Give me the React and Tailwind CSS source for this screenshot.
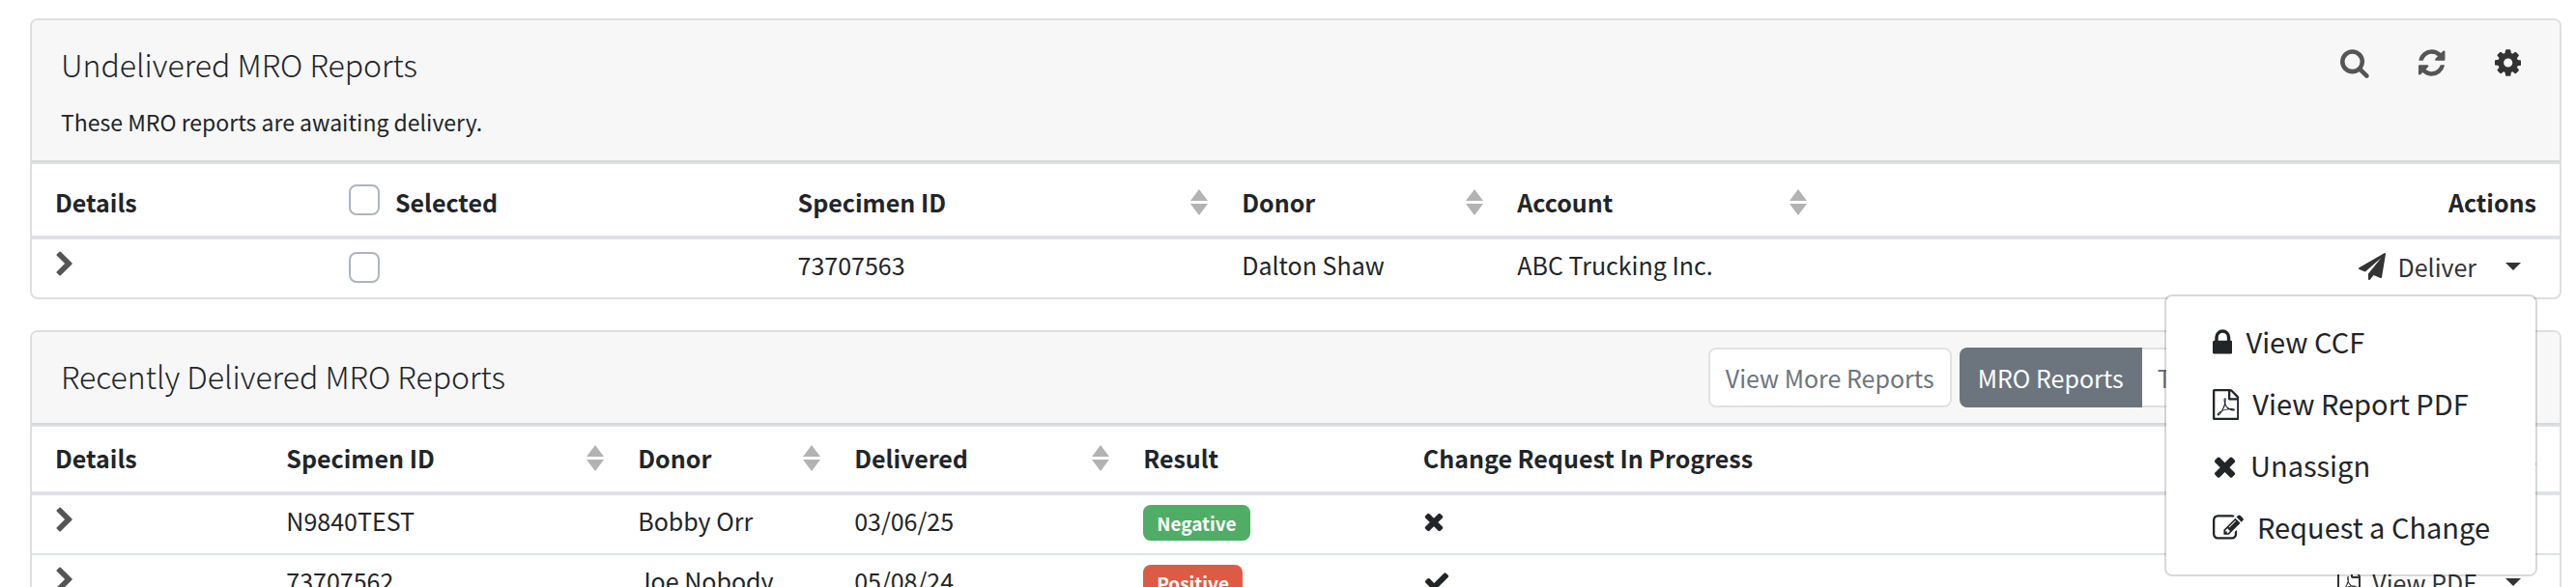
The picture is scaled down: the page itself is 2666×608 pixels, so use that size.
import React from "react";

const GLYPHS = {
  search: ["64 0 1664 1792", "M1216 832q0-185-131.5-316.5t-316.5-131.5-316.5 131.5-131.5 316.5 131.5 316.5 316.5 131.5 316.5-131.5 131.5-316.5zm512 832q0 52-38 90t-90 38q-54 0-90-38l-343-342q-179 124-399 124-143 0-273.5-55.5t-225-150-150-225-55.5-273.5 55.5-273.5 150-225 225-150 273.5-55.5 273.5 55.5 225 150 150 225 55.5 273.5q0 220-124 399l343 343q37 37 37 90z"],
  refresh: ["128 0 1536 1792", "M1639 1056q0 5-1 7-64 268-268 434.5t-478 166.5q-146 0-282.5-55t-243.5-157l-129 129q-19 19-45 19t-45-19-19-45v-448q0-26 19-45t45-19h448q26 0 45 19t19 45-19 45l-137 137q71 66 161 102t187 36q134 0 250-65t186-179q11-17 53-117 8-23 30-23h192q13 0 22.5 9.5t9.5 22.5zm25-800v448q0 26-19 45t-45 19h-448q-26 0-45-19t-19-45 19-45l138-138q-148-137-349-137-134 0-250 65t-186 179q-11 17-53 117-8 23-30 23h-199q-13 0-22.5-9.5t-9.5-22.5v-7q65-268 270-434.5t480-166.5q146 0 284 55.5t245 156.5l130-129q19-19 45-19t45 19 19 45z"],
  cog: ["128 0 1536 1792", "M1152 896q0-106-75-181t-181-75-181 75-75 181 75 181 181 75 181-75 75-181zm512-109v222q0 12-8 23t-20 13l-185 28q-19 54-39 91 35 50 107 138 10 12 10 25t-9 23q-27 37-99 108t-94 71q-12 0-26-9l-138-108q-44 23-91 38-16 136-29 186-7 28-36 28h-222q-14 0-24.5-8.5t-11.5-21.5l-28-184q-49-16-90-37l-141 107q-10 9-25 9-14 0-25-11-126-114-165-168-7-10-7-23 0-12 8-23 15-21 51-66.5t54-70.5q-27-50-41-99l-183-27q-13-2-21-12.5t-8-23.5v-222q0-12 8-23t19-13l186-28q14-46 39-92-40-57-107-138-10-12-10-24 0-10 9-23 26-36 98.5-107.5t94.5-71.5q13 0 26 10l138 107q44-23 91-38 16-136 29-186 7-28 36-28h222q14 0 24.5 8.5t11.5 21.5l28 184q49 16 90 37l142-107q9-9 24-9 13 0 25 10 129 119 165 170 7 8 7 22 0 12-8 23-15 21-51 66.5t-54 70.5q26 50 41 98l183 28q13 2 21 12.5t8 23.5z"],
  lock: ["320 0 1152 1792", "M640 768h512v-192q0-106-75-181t-181-75-181 75-75 181v192zm832 96v576q0 40-28 68t-68 28h-960q-40 0-68-28t-28-68v-576q0-40 28-68t68-28h32v-192q0-184 132-316t316-132 316 132 132 316v192h32q40 0 68 28t28 68z"],
  pdf: ["128 0 1536 1792", "M1596 380q28 28 48 76t20 88v1152q0 40-28 68t-68 28h-1344q-40 0-68-28t-28-68v-1600q0-40 28-68t68-28h896q40 0 88 20t76 48zm-444-244v376h376q-10-29-22-41l-313-313q-12-12-41-22zm384 1528v-1024h-416q-40 0-68-28t-28-68v-416h-768v1536h1280zm-514-593q33 26 84 56 59-7 117-7 147 0 177 49 16 22 2 52 0 1-1 2l-2 2v1q-6 38-71 38-48 0-115-20t-130-53q-221 24-392 83-153 262-242 262-15 0-28-7l-24-12q-1-1-6-5-10-10-6-36 9-40 56-91.5t132-96.5q14-9 23 6 2 2 2 4 52-85 107-197 68-136 104-262-24-82-30.5-159.5t6.5-127.5q11-40 42-40h22q23 0 35 15 18 21 9 68-2 6-4 8 1 3 1 8v30q-2 123-14 192 55 164 146 238zm-576 411q52-24 137-158-51 40-87.5 84t-49.5 74zm398-920q-15 42-2 132 1-7 7-44 0-3 7-43 1-4 4-8-1-1-1-2-1-2-1-3-1-22-13-36 0 1-1 2v2zm-124 661q135-54 284-81-2-1-13-9.5t-16-13.5q-76-67-127-176-27 86-83 197-30 56-45 83zm646-16q-24-24-140-24 76 28 124 28 14 0 18-1 0-1-2-3z"],
  times: ["192 0 1408 1792", "M1490 1322q0 40-28 68l-136 136q-28 28-68 28t-68-28l-294-294-294 294q-28 28-68 28t-68-28l-136-136q-28-28-28-68t28-68l294-294-294-294q-28-28-28-68t28-68l136-136q28-28 68-28t68 28l294 294 294-294q28-28 68-28t68 28l136 136q28 28 28 68t-28 68l-294 294 294 294q28 28 28 68z"],
  check: ["0 0 1792 1792", "M1671 566q0 40-28 68l-724 724-136 136q-28 28-68 28t-68-28l-136-136-362-362q-28-28-28-68t28-68l136-136q28-28 68-28t68 28l294 295 656-657q28-28 68-28t68 28l136 136q28 28 28 68z"],
  edit: ["0 0 1792 1792", "M888 1184l116-116-152-152-116 116v56h96v96h56zm440-720q-16-16-33 1l-350 350q-17 17-1 33t33-1l350-350q17-17 1-33zm80 594v190q0 119-84.5 203.5t-203.5 84.5h-832q-119 0-203.5-84.5t-84.5-203.5v-832q0-119 84.5-203.5t203.5-84.5h832q63 0 117 25 15 7 18 23 3 17-9 29l-49 49q-14 14-32 8-23-6-45-6h-832q-66 0-113 47t-47 113v832q0 66 47 113t113 47h832q66 0 113-47t47-113v-126q0-13 9-22l64-64q15-15 35-7t20 29zm-96-738l288 288-672 672h-288v-288zm444 132l-92 92-288-288 92-92q28-28 68-28t68 28l152 152q28 28 28 68t-28 68z"],
  chevron: ["250 0 1280 1792", "M1363 877l-742 742q-19 19-45 19t-45-19l-166-166q-19-19-19-45t19-45l531-531-531-531q-19-19-19-45t19-45l166-166q19-19 45-19t45 19l742 742q19 19 19 45t-19 45z"],
  plane: ["0 0 1792 1792", "M1764 11q33 24 27 64l-256 1536q-5 29-32 45-14 8-31 8-11 0-24-5l-453-185-242 295q-18 23-49 23-13 0-22-4-19-7-30.5-23.5t-11.5-36.5v-349l864-1059-1069 925-395-162q-37-14-40-55-2-40 32-59l1664-960q15-9 32-9 20 0 36 11z"],
};

function Icon({ name, className = "h-7" }) {
  const [viewBox, d] = GLYPHS[name];
  return (
    <svg viewBox={viewBox} fill="currentColor" aria-hidden="true" className={`block w-auto shrink-0 ${className}`}>
      <path d={d} />
    </svg>
  );
}

function Caret() {
  return (
    <svg viewBox="0 0 16 8" fill="currentColor" aria-hidden="true" className="block h-2 w-4">
      <path d="M0 0H16L8 8Z" />
    </svg>
  );
}

function Th({ children, className = "", sortable }) {
  return (
    <th scope="col" className={`border-b-4 border-[#dee2e6] pb-[17px] pl-6 text-left align-bottom font-bold ${sortable ? "pr-[11px]" : "pr-6"} ${className}`}>
      {sortable ? (
        <div className="flex items-center justify-between">
          <span>{children}</span>
          <button type="button" aria-label={`Sort by ${children}`} className="text-[#b3b3b3]">
            <svg viewBox="0 0 18 27" fill="currentColor" className="block h-[27px] w-[18px]">
              <path d="M9 0L18 12H0ZM0 15H18L9 27Z" />
            </svg>
          </button>
        </div>
      ) : (
        children
      )}
    </th>
  );
}

function Td({ children, className = "pt-2" }) {
  return <td className={`px-6 align-top ${className}`}>{children}</td>;
}

function DetailsCell() {
  return (
    <Td className="pt-3">
      <button type="button" aria-label="Show details" className="block text-[#555]">
        <Icon name="chevron" />
      </button>
    </Td>
  );
}

function Checkbox({ label }) {
  return (
    <input
      type="checkbox"
      aria-label={label}
      className="block size-8 shrink-0 appearance-none rounded-lg border-2 border-[#adb5bd] bg-white"
    />
  );
}

function Tools() {
  return (
    <div className="flex items-center gap-[51px] pr-5 text-[#555]">
      <button type="button" aria-label="Search"><Icon name="search" className="h-8" /></button>
      <button type="button" aria-label="Refresh"><Icon name="refresh" className="h-8" /></button>
      <button type="button" aria-label="Settings" className="text-[#333]"><Icon name="cog" className="h-8" /></button>
    </div>
  );
}

function Action({ icon, label }) {
  return (
    <div className="flex items-center justify-end text-[#333]">
      <button type="button" className="flex items-center gap-3">
        <Icon name={icon} />
        {label}
      </button>
      <button type="button" aria-label="More actions" className="ml-[14px] px-4"><Caret /></button>
    </div>
  );
}

const MENU = [
  ["lock", "View CCF"],
  ["pdf", "View Report PDF"],
  ["times", "Unassign"],
  ["edit", "Request a Change"],
];

function ActionMenu() {
  return (
    <ul className="absolute top-[57px] right-[23px] z-10 w-max rounded-lg border-2 border-black/15 bg-white bg-clip-padding py-4 text-[29px] leading-[44px] text-[#212529]">
      {MENU.map(([icon, label]) => (
        <li key={label}>
          <button type="button" className="flex w-full items-center gap-[14px] py-2 pr-[47px] pl-12">
            <Icon name={icon} className="h-8" />
            <span className="pb-1">{label}</span>
          </button>
        </li>
      ))}
    </ul>
  );
}

const DELIVERED = [
  { id: "N9840TEST", donor: "Bobby Orr", date: "03/06/25", result: "Negative", badge: "bg-[#4fad66]", change: "times" },
  { id: "73707562", donor: "Joe Nobody", date: "05/08/24", result: "Positive", badge: "bg-[#dc5b45]", change: "check" },
];

export default function App() {
  return (
    <main className="flex h-screen flex-col gap-8 overflow-hidden bg-white pt-[19px] pr-[15px] pl-[31px] font-['Noto_Sans_CJK_SC','Noto_Sans',sans-serif] text-[25px] leading-9 text-[#212529]">
      <section className="shrink-0 rounded-lg border-2 border-[#dfdfdf] bg-white">
        <header className="flex h-[147px] items-start justify-between rounded-t-md border-b-2 border-[#d8d8d8] bg-[#f7f7f7] pt-5 pr-5 pl-[30px]">
          <div>
            <h2 className="text-[32px] leading-[50px] font-light">Undelivered MRO Reports</h2>
            <p className="mt-[17px] text-[23px] leading-9">These MRO reports are awaiting delivery.</p>
          </div>
          <div className="mt-2"><Tools /></div>
        </header>
        <table className="w-full table-fixed border-separate border-spacing-0 border-t-2 border-[#dee2e6]">
          <colgroup>
            <col className="w-[11.62%]" />
            <col className="w-[17.76%]" />
            <col className="w-[17.57%]" />
            <col className="w-[10.9%]" />
            <col className="w-[12.81%]" />
            <col />
          </colgroup>
          <thead>
            <tr className="h-[78px]">
              <Th>Details</Th>
              <Th>
                <label className="flex items-center gap-4">
                  <span className="pb-1"><Checkbox label="Select all" /></span>
                  Selected
                </label>
              </Th>
              <Th sortable>Specimen ID</Th>
              <Th sortable>Donor</Th>
              <Th sortable>Account</Th>
              <Th className="text-right">Actions</Th>
            </tr>
          </thead>
          <tbody>
            <tr className="h-[60px]">
              <DetailsCell />
              <Td className="pt-[13px]"><Checkbox label="Select 73707563" /></Td>
              <Td>73707563</Td>
              <Td>Dalton Shaw</Td>
              <Td>ABC Trucking Inc.</Td>
              <td className="relative pt-[10px] pr-6 align-top">
                <Action icon="plane" label="Deliver" />
                <ActionMenu />
              </td>
            </tr>
          </tbody>
        </table>
      </section>

      <section className="shrink-0 rounded-lg border-2 border-[#dfdfdf] bg-white">
        <header className="flex h-24 items-center justify-between rounded-t-md border-b-2 border-[#d8d8d8] bg-[#f7f7f7] pr-5 pl-[30px]">
          <h2 className="pb-1 text-[32px] leading-[50px] font-light">Recently Delivered MRO Reports</h2>
          <div className="flex items-center text-[#6c757d]">
            <button type="button" className="mr-2 h-[62px] rounded-lg border-2 border-[#e2e2e2] bg-white px-4">View More Reports</button>
            <button type="button" className="h-[62px] rounded-l-lg bg-[#6c757d] px-[19px] text-white">MRO Reports</button>
            <button type="button" className="mr-7 h-[62px] rounded-r-lg border-y-2 border-r-2 border-[#e2e2e2] bg-white px-4">Test Reports</button>
            <Tools />
          </div>
        </header>
        <table className="w-full table-fixed border-separate border-spacing-0 border-t-2 border-[#dee2e6]">
          <colgroup>
            <col className="w-[9.15%]" />
            <col className="w-[13.91%]" />
            <col className="w-[8.56%]" />
            <col className="w-[11.43%]" />
            <col className="w-[11.07%]" />
            <col className="w-[20%]" />
            <col />
          </colgroup>
          <thead>
            <tr className="h-[71px]">
              <Th>Details</Th>
              <Th sortable>Specimen ID</Th>
              <Th sortable>Donor</Th>
              <Th sortable>Delivered</Th>
              <Th>Result</Th>
              <Th>Change Request In Progress</Th>
              <Th className="text-right">Actions</Th>
            </tr>
          </thead>
          <tbody className="[&>tr>td]:border-b-2 [&>tr>td]:border-[#dee2e6]">
            {DELIVERED.map((row) => (
              <tr key={row.id} className="h-[62px]">
                <DetailsCell />
                <Td>{row.id}</Td>
                <Td>{row.donor}</Td>
                <Td>{row.date}</Td>
                <Td className="pt-[10px]">
                  <span className={`block w-fit rounded-lg px-[14px] text-[19px] leading-[37px] font-bold text-white ${row.badge}`}>{row.result}</span>
                </Td>
                <Td className="pt-[13px]"><Icon name={row.change} /></Td>
                <Td className="pt-[10px]"><Action icon="pdf" label="View PDF" /></Td>
              </tr>
            ))}
          </tbody>
        </table>
      </section>
    </main>
  );
}
